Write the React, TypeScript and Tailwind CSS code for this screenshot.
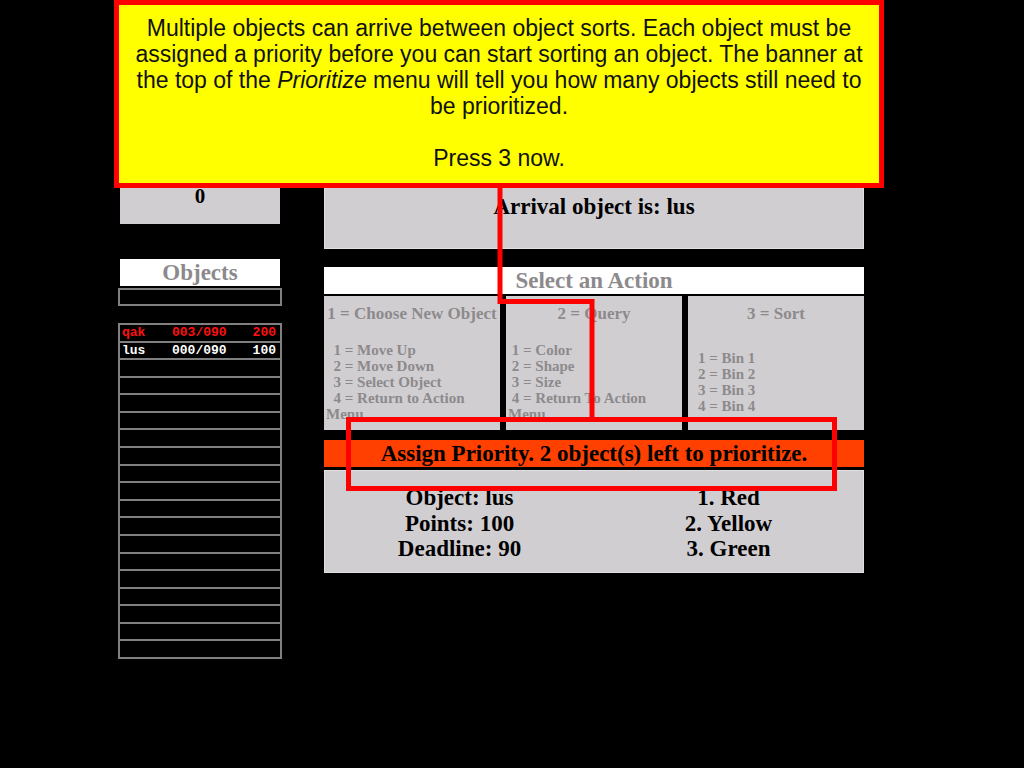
const serif = "font-['Liberation_Serif',serif]";

type Obj = { name: string; progress: string; points: string; active?: boolean };

const objects: Obj[] = [
  { name: 'qak', progress: '003/090', points: '200', active: true },
  { name: 'lus', progress: '000/090', points: '100' },
];

const ROWS = 19;

function ObjectList() {
  const rows = Array.from({ length: ROWS }, (_, i) => objects[i]);
  return (
    <div className="mt-[17px] border-x-2 border-t-2 border-[#808080]">
      {rows.map((o, i) => (
        <div
          key={i}
          className={`h-[17.58px] border-b-2 border-[#808080] flex items-center font-['Liberation_Mono',monospace] text-[13px] font-bold leading-none ${
            o?.active ? 'text-[#ff1010]' : 'text-white'
          }`}
        >
          {o && (
            <>
              <span className="w-[52px] pl-[2px]">{o.name}</span>
              <span className="w-[56px]">{o.progress}</span>
              <span className="flex-1 text-right pr-[4px]">{o.points}</span>
            </>
          )}
        </div>
      ))}
    </div>
  );
}

interface ActionColProps {
  title: string;
  items: string[];
  indent: string;
  itemsClass: string;
}

function ActionCol({ title, items, indent, itemsClass }: ActionColProps) {
  return (
    <div className={`bg-[#d1ced1] text-[#8c8a8c] font-bold ${serif}`}>
      <div className="pt-[8px] text-center text-[17px] leading-[20px] whitespace-nowrap">{title}</div>
      <div className={`text-[15px] leading-[16px] ${itemsClass}`}>
        {items.map((it, i) => (
          <div key={i} className="whitespace-pre">
            {it === 'Menu' ? it : indent + it}
          </div>
        ))}
      </div>
    </div>
  );
}

export default function App() {
  return (
    <div className="relative w-[1024px] h-[768px] bg-black overflow-hidden">
      <div className="flex">
        {/* Left column */}
        <div className="ml-[118px] w-[164px]">
          <div className={`mx-[2px] mt-[140px] h-[84px] bg-[#d1ced1] pt-[44px] text-center text-[21px] leading-[24px] font-bold text-black ${serif}`}>
            0
          </div>
          <div className={`mx-[2px] mt-[35px] h-[27px] bg-white text-center text-[23px] leading-[27px] font-bold text-[#8c8a8c] ${serif}`}>
            Objects
          </div>
          <div className="mt-[2px] h-[18px] border-2 border-[#808080]" />
          <ObjectList />
        </div>

        {/* Right column */}
        <div className="ml-[42px] w-[540px]">
          <div className={`mt-[150px] h-[99px] bg-[#d1ced1] border border-[#e2dfe2] pt-[44px] text-center text-[23px] leading-[24px] font-bold text-black ${serif}`}>
            Arrival object is: lus
          </div>
          <div className={`mt-[18px] h-[27px] bg-white text-center text-[23px] leading-[27px] font-bold text-[#8c8a8c] ${serif}`}>
            Select an Action
          </div>
          <div className="mt-[2px] h-[134px] grid grid-cols-3 gap-[6px]">
            <ActionCol
              title="1 = Choose New Object"
              indent={'\u00a0\u00a0'}
              itemsClass="mt-[18px] px-[2px]"
              items={['1 = Move Up', '2 = Move Down', '3 = Select Object', '4 = Return to Action', 'Menu']}
            />
            <ActionCol
              title="2 = Query"
              indent={'\u00a0'}
              itemsClass="mt-[18px] px-[2px]"
              items={['1 = Color', '2 = Shape', '3 = Size', '4 = Return To Action', 'Menu']}
            />
            <ActionCol
              title="3 = Sort"
              indent=""
              itemsClass="mt-[26px] pl-[10px]"
              items={['1 = Bin 1', '2 = Bin 2', '3 = Bin 3', '4 = Bin 4']}
            />
          </div>
          <div className={`mt-[10px] h-[27px] bg-[#ff4000] text-center text-[23px] leading-[27px] font-bold text-black whitespace-nowrap ${serif}`}>
            Assign Priority. 2 object(s) left to prioritize.
          </div>
          <div className={`mt-[3px] h-[103px] bg-[#d1ced1] border border-[#e2dfe2] grid grid-cols-2 pt-[14px] text-center text-[23px] leading-[25.5px] font-bold text-black ${serif}`}>
            <div>
              <div>Object: lus</div>
              <div>Points: 100</div>
              <div>Deadline: 90</div>
            </div>
            <div>
              <div>1. Red</div>
              <div>2. Yellow</div>
              <div>3. Green</div>
            </div>
          </div>
        </div>
      </div>

      {/* Tutorial callout */}
      <div className="absolute left-[114px] top-0 w-[770px] h-[188px] bg-[#ffff00] border-[5px] border-[#ff0000] pt-[10px] text-center text-[23px] leading-[26px] text-[#111] whitespace-nowrap font-['Liberation_Sans',sans-serif]">
        Multiple objects can arrive between object sorts. Each object must be
        <br />
        assigned a priority before you can start sorting an object. The banner at
        <br />
        the top of the <i>Prioritize</i> menu will tell you how many objects still need to
        <br />
        be prioritized.
        <br />
        <br />
        Press 3 now.
      </div>

      {/* Pointer to the priority banner */}
      <svg className="absolute left-0 top-0 pointer-events-none" width="1024" height="768">
        <polyline points="500,186 500,301.5 592,301.5 592,420" fill="none" stroke="#ff0000" strokeWidth="5" />
        <rect x="348.5" y="419.5" width="486" height="69" fill="none" stroke="#ff0000" strokeWidth="5" />
      </svg>
    </div>
  );
}
